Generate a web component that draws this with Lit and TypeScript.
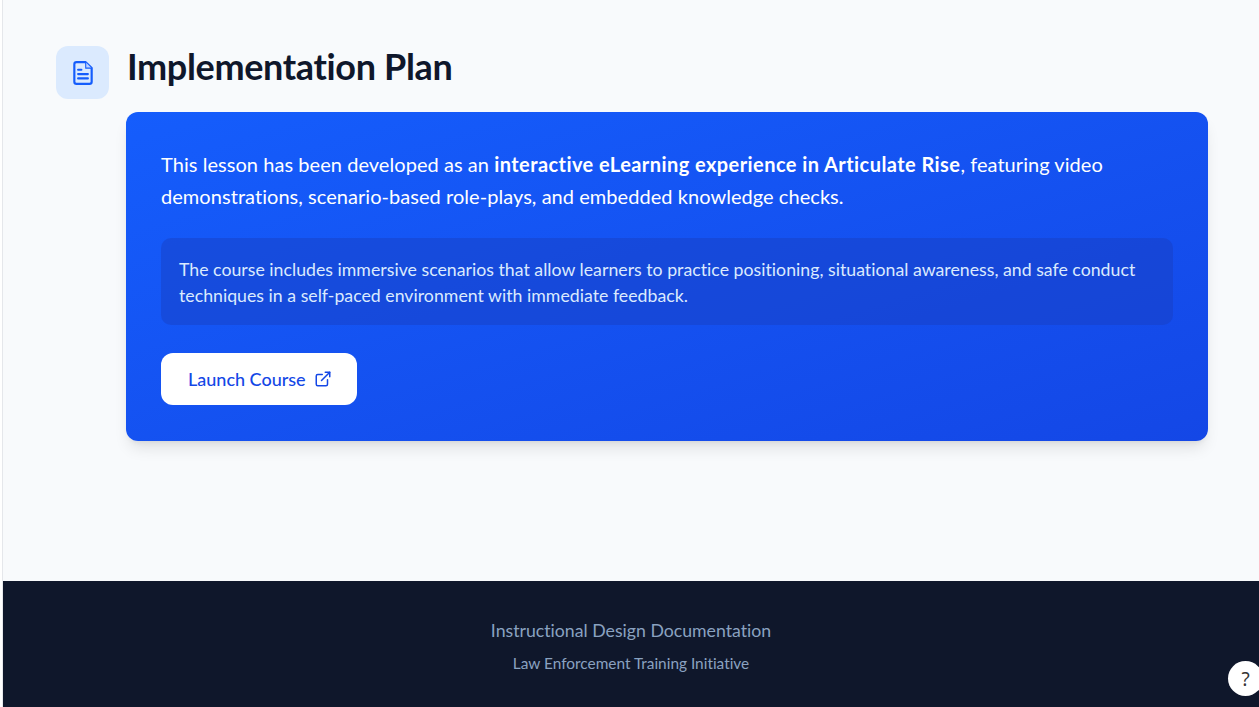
import { LitElement, html, css } from "lit";
import { customElement } from "lit/decorators.js";

@customElement("app-root")
export class AppRoot extends LitElement {
  static styles = css`
    :host {
      display: block;
      height: 707px;
      overflow: hidden;
      position: relative;
      background: #fff;
      font-family: "Lato", "Noto Sans", sans-serif;
      font-variant-ligatures: none;
    }
    .page {
      margin-left: 2px;
      border-left: 1px solid #e5e7eb;
      height: 707px;
      display: flex;
      flex-direction: column;
    }
    main {
      height: 581px;
      box-sizing: border-box;
      background: #f8fafc;
      padding: 46px 51px 0 53px;
    }
    .head {
      display: flex;
      gap: 18px;
      height: 66px;
    }
    .icon {
      width: 53px;
      height: 53px;
      border-radius: 12px;
      background: #dbeafe;
      display: flex;
      align-items: center;
      justify-content: center;
      color: #155dfc;
    }
    h1 {
      margin: 0;
      font-size: 36px;
      line-height: 40px;
      font-weight: 700;
      letter-spacing: -0.35px;
      color: #0f172b;
    }
    .card {
      margin-left: 70px;
      box-sizing: border-box;
      height: 329px;
      padding: 36px 35px 35px;
      border-radius: 12px;
      color: #fff;
      background: linear-gradient(to bottom right, #155dfc 0%, #1447e6 100%);
      box-shadow: 0 10px 15px -3px rgba(0, 0, 0, 0.1), 0 4px 6px -4px rgba(0, 0, 0, 0.1);
    }
    .lead {
      margin: 0 0 26px;
      font-size: 20px;
      line-height: 32px;
      letter-spacing: 0.05px;
    }
    .lead strong {
      letter-spacing: 0.43px;
    }
    .note {
      box-sizing: border-box;
      height: 87px;
      padding: 19px 18px;
      border-radius: 10px;
      background: rgba(25, 60, 184, 0.4);
      color: #dbeafe;
      font-size: 17.7px;
      line-height: 26px;
      letter-spacing: 0.02px;
      margin-bottom: 28px;
    }
    .btn {
      display: inline-flex;
      align-items: center;
      gap: 8px;
      height: 52px;
      box-sizing: border-box;
      padding: 0 25px 0 27px;
      border-radius: 12px;
      background: #fff;
      color: #1447e6;
      font-size: 18px;
      font-weight: 500;
    }
    footer {
      flex: 1;
      background: #0f172b;
      text-align: center;
      color: #8aa2c0;
    }
    .f1 {
      margin: 38px 0 0;
      font-size: 17.7px;
      line-height: 24px;
    }
    .f2 {
      margin: 8px 0 0;
      font-size: 15.4px;
      line-height: 24px;
    }
    .help {
      position: absolute;
      left: 1228px;
      top: 661px;
      width: 35px;
      height: 35px;
      border-radius: 50%;
      background: #fff;
      color: #333;
      display: flex;
      align-items: center;
      justify-content: center;
      font-family: "Noto Sans", sans-serif;
      font-size: 19px;
    }
  `;

  render() {
    return html`
      <div class="page">
        <main>
          <div class="head">
            <div class="icon">
              <svg width="26" height="26" viewBox="0 0 24 24" fill="none" stroke="currentColor" stroke-width="2" stroke-linecap="round" stroke-linejoin="round">
                <path d="M14.5 2H6a2 2 0 0 0-2 2v16a2 2 0 0 0 2 2h12a2 2 0 0 0 2-2V7.5L14.5 2z"></path>
                <path d="M14.5 2v5.5H20" stroke-width="1" fill="#bfd4ff"></path>
                <path d="M16.5 13h-9"></path>
                <path d="M16.5 17h-9"></path>
                <path d="M10.5 9h-3"></path>
              </svg>
            </div>
            <h1>Implementation Plan</h1>
          </div>
          <section class="card">
            <p class="lead">This lesson has been developed as an <strong>interactive eLearning experience in Articulate Rise</strong>, featuring video demonstrations, scenario-based role-plays, and embedded knowledge checks.</p>
            <div class="note">The course includes immersive scenarios that allow learners to practice positioning, situational awareness, and safe conduct techniques in a self-paced environment with immediate feedback.</div>
            <div class="btn">
              <span>Launch Course</span>
              <svg width="18" height="18" viewBox="0 0 24 24" fill="none" stroke="currentColor" stroke-width="2" stroke-linecap="round" stroke-linejoin="round">
                <path d="M15 3h6v6"></path>
                <path d="M10 14 21 3"></path>
                <path d="M18 13v6a2 2 0 0 1-2 2H5a2 2 0 0 1-2-2V8a2 2 0 0 1 2-2h6"></path>
              </svg>
            </div>
          </section>
        </main>
        <footer>
          <p class="f1">Instructional Design Documentation</p>
          <p class="f2">Law Enforcement Training Initiative</p>
        </footer>
      </div>
      <div class="help">?</div>
    `;
  }
}
